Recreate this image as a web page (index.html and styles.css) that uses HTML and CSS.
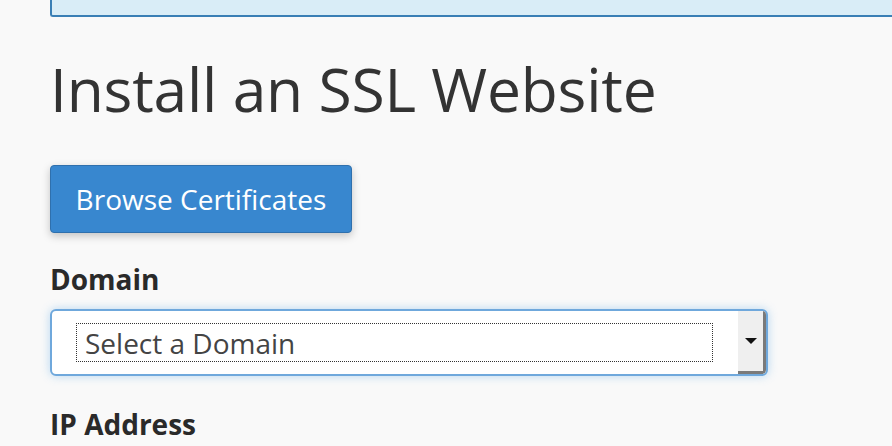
FILE: index.html
```html
<!DOCTYPE html>
<html>
<head>
<meta charset="utf-8">
<link rel="stylesheet" href="styles.css">
</head>
<body>
<div class="page">
  <div class="callout"></div>
  <h1 class="title">Install an SSL Website</h1>
  <button class="btn-primary" type="button">Browse Certificates</button>
  <div class="field">
    <label class="field-label">Domain</label>
    <div class="select">
      <div class="select-value"><span class="focus-ring">Select a Domain</span></div>
      <div class="select-arrow"><span class="caret"></span></div>
    </div>
  </div>
  <div class="field field-next">
    <label class="field-label">IP Address</label>
  </div>
</div>
</body>
</html>
```
FILE: styles.css
```css
html, body {
  margin: 0;
  padding: 0;
  background: #f9f9f9;
  font-family: "Open Sans", "Noto Sans", sans-serif;
  color: #333;
  overflow: hidden;
}
.page {
  padding-left: 50px;
  width: 842px;
}
.callout {
  height: 15px;
  margin-right: -20px;
  background: #d9edf7;
  border-left: 2px solid #3a7fb5;
  border-bottom: 2px solid #3a7fb5;
  border-bottom-left-radius: 3px;
}
.title {
  margin: 32px 0 0 0;
  font-size: 60.5px;
  font-weight: 400;
  line-height: 80px;
  color: #333;
  letter-spacing: -0.2px;
}
.btn-primary {
  display: block;
  margin-top: 36px;
  width: 302px;
  height: 68px;
  padding: 0;
  font-family: inherit;
  font-size: 28px;
  color: #fff;
  background: #3887cf;
  border: 1px solid #2f70ad;
  border-radius: 4px;
  box-shadow: 0 3px 8px rgba(0,0,0,0.22);
}
.field {
  margin-top: 30px;
}
.field-next {
  margin-top: 32px;
}
.field-label {
  display: block;
  font-size: 28px;
  font-weight: 700;
  line-height: 32px;
  color: #2a2a2a;
}
.select {
  margin-top: 14px;
  width: 718px;
  height: 67px;
  box-sizing: border-box;
  display: flex;
  border: 2px solid #6fa8dc;
  border-radius: 6px;
  background: #fff;
  box-shadow: 0 0 10px rgba(102,175,233,0.45);
  overflow: hidden;
}
.select-value {
  flex: 1;
  padding: 12px 25px 12px 24px;
}
.focus-ring {
  display: flex;
  align-items: center;
  height: 39px;
  box-sizing: border-box;
  border: 1px dotted #333;
  padding-left: 8px;
  font-size: 28px;
  color: #444;
}
.select-arrow {
  width: 25px;
  background: #efefef;
  border-right: 3px solid #7a7a7a;
  border-bottom: 3px solid #7a7a7a;
  border-bottom-right-radius: 4px;
  display: flex;
  align-items: center;
  justify-content: center;
}
.caret {
  width: 0;
  height: 0;
  border-left: 6px solid transparent;
  border-right: 6px solid transparent;
  border-top: 6px solid #111;
}
```
